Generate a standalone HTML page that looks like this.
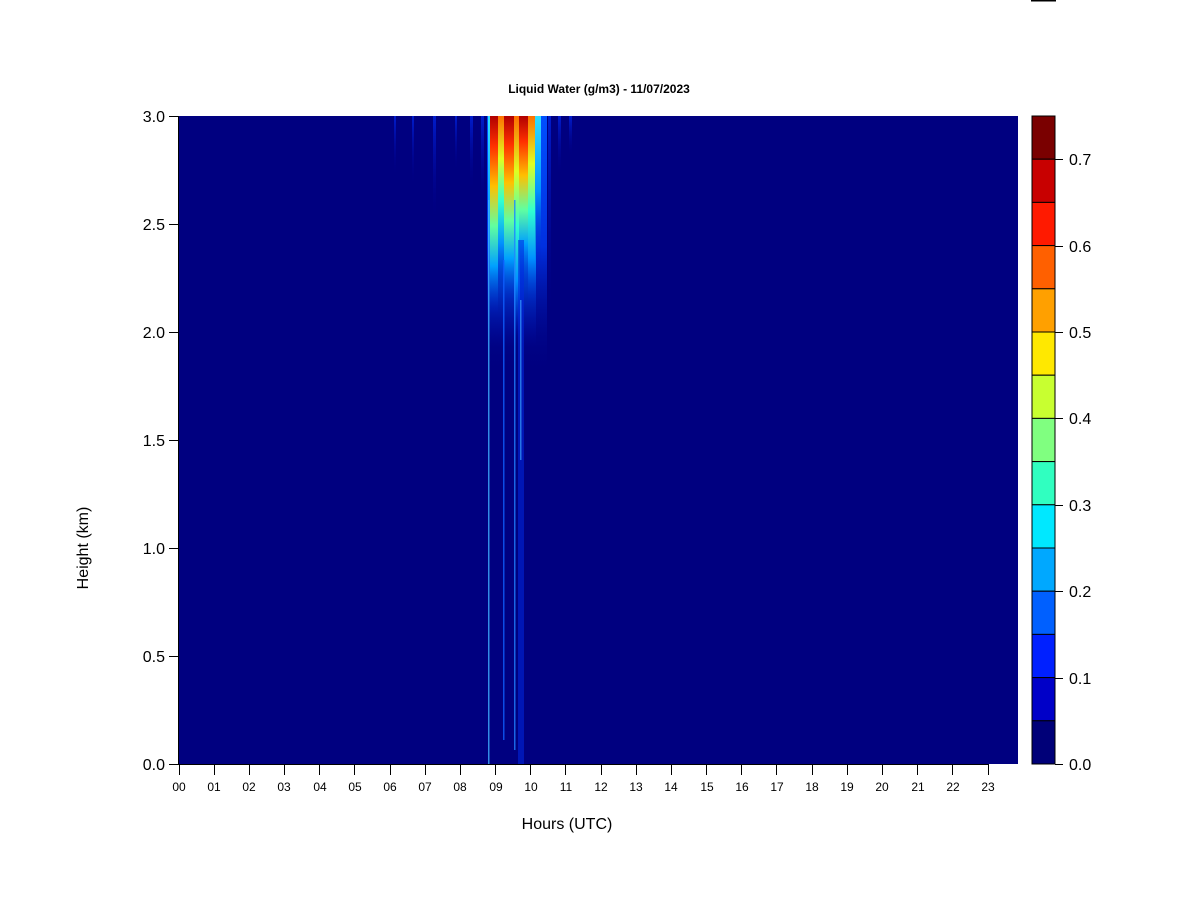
<!DOCTYPE html>
<html><head><meta charset="utf-8"><style>
html,body{margin:0;padding:0;background:#fff;}
svg{display:block;font-family:"Liberation Sans",Arial,sans-serif;}
</style></head><body>
<svg width="1200" height="900" viewBox="0 0 1200 900" xmlns="http://www.w3.org/2000/svg">
<defs>
<linearGradient id="hot" x1="0" y1="0" x2="0" y2="1">
<stop offset="0" stop-color="#b00000"/><stop offset="0.15" stop-color="#ff3000"/><stop offset="0.35" stop-color="#ffc000"/><stop offset="0.55" stop-color="#60ffa0"/><stop offset="0.75" stop-color="#00a0ff"/><stop offset="1" stop-color="#0010c0" stop-opacity="0"/></linearGradient>
<linearGradient id="warm" x1="0" y1="0" x2="0" y2="1">
<stop offset="0" stop-color="#ff7000"/><stop offset="0.25" stop-color="#e0ff20"/><stop offset="0.5" stop-color="#30ffd0"/><stop offset="0.75" stop-color="#0090ff"/><stop offset="1" stop-color="#0010c0" stop-opacity="0"/></linearGradient>
<linearGradient id="cool" x1="0" y1="0" x2="0" y2="1">
<stop offset="0" stop-color="#0050ff"/><stop offset="0.5" stop-color="#0030e0"/><stop offset="1" stop-color="#000080" stop-opacity="0"/></linearGradient>
<linearGradient id="cyan" x1="0" y1="0" x2="0" y2="1">
<stop offset="0" stop-color="#30e0ff"/><stop offset="0.5" stop-color="#0090ff"/><stop offset="1" stop-color="#0010c0" stop-opacity="0"/></linearGradient>
<linearGradient id="faint" x1="0" y1="0" x2="0" y2="1">
<stop offset="0" stop-color="#0030ff"/><stop offset="1" stop-color="#000090" stop-opacity="0"/></linearGradient>
</defs>
<rect x="1031" y="0" width="25" height="1.5" fill="#000"/>
<text x="599" y="93" font-size="12" font-weight="bold" text-anchor="middle">Liquid Water (g/m3) - 11/07/2023</text>
<rect x="179" y="116" width="839" height="648" fill="#000080"/>
<g opacity="0.6">
<rect x="394" y="116" width="2" height="60" fill="url(#faint)"/>
<rect x="412" y="116" width="2" height="70" fill="url(#faint)"/>
<rect x="433" y="116" width="3" height="105" fill="url(#faint)"/>
<rect x="455" y="116" width="2" height="55" fill="url(#faint)"/>
<rect x="470" y="116" width="3" height="75" fill="url(#faint)"/>
<rect x="481" y="116" width="3" height="90" fill="url(#faint)"/>
<rect x="548" y="116" width="3" height="200" fill="url(#faint)"/>
<rect x="558" y="116" width="3" height="60" fill="url(#faint)"/>
<rect x="569" y="116" width="3" height="40" fill="url(#faint)"/>
</g>
<rect x="487" y="116" width="60" height="260" fill="url(#cool)"/>
<rect x="488" y="116" width="48" height="230" fill="url(#cyan)"/>
<rect x="490" y="116" width="8" height="200" fill="url(#hot)"/>
<rect x="498" y="116" width="8" height="170" fill="url(#warm)"/>
<rect x="504" y="116" width="10" height="190" fill="url(#hot)"/>
<rect x="514" y="116" width="6" height="220" fill="url(#warm)"/>
<rect x="519" y="116" width="10" height="170" fill="url(#hot)"/>
<rect x="528" y="116" width="8" height="190" fill="url(#warm)"/>
<rect x="535" y="116" width="6" height="150" fill="url(#cyan)"/>
<g opacity="0.8">
<rect x="488" y="200" width="1.5" height="564" fill="#40b0ff"/>
<rect x="503" y="260" width="1.5" height="480" fill="#1060ff"/>
<rect x="514" y="200" width="1.5" height="550" fill="#2080ff"/>
<rect x="518" y="240" width="6" height="524" fill="#0028e0" opacity="0.7"/>
<rect x="520" y="300" width="1.5" height="160" fill="#3090ff"/>
</g>
<g stroke="#000" stroke-width="1" fill="none">
<line x1="179" y1="764.5" x2="989" y2="764.5"/>
<line x1="178.5" y1="116" x2="178.5" y2="764"/>
</g>
<g stroke="#000" stroke-width="1">
<line x1="169" y1="116.5" x2="179" y2="116.5"/><line x1="169" y1="224.5" x2="179" y2="224.5"/><line x1="169" y1="332.5" x2="179" y2="332.5"/><line x1="169" y1="440.5" x2="179" y2="440.5"/><line x1="169" y1="548.5" x2="179" y2="548.5"/><line x1="169" y1="656.5" x2="179" y2="656.5"/><line x1="169" y1="764.5" x2="179" y2="764.5"/>
</g>
<g font-size="16" text-anchor="end">
<text x="165" y="122">3.0</text><text x="165" y="230">2.5</text><text x="165" y="338">2.0</text><text x="165" y="446">1.5</text><text x="165" y="554">1.0</text><text x="165" y="662">0.5</text><text x="165" y="770">0.0</text>
</g>
<text x="88" y="548" font-size="16" text-anchor="middle" transform="rotate(-90 88 548)">Height (km)</text>
<text x="567" y="829" font-size="16" text-anchor="middle">Hours (UTC)</text>
<g stroke="#000" stroke-width="1">
<rect x="1032" y="116" width="23" height="43.2" fill="#7a0000"/>
<rect x="1032" y="159.2" width="23" height="43.2" fill="#c80000"/>
<rect x="1032" y="202.4" width="23" height="43.2" fill="#ff1a00"/>
<rect x="1032" y="245.6" width="23" height="43.2" fill="#ff6000"/>
<rect x="1032" y="288.8" width="23" height="43.2" fill="#ffa000"/>
<rect x="1032" y="332" width="23" height="43.2" fill="#ffe800"/>
<rect x="1032" y="375.2" width="23" height="43.2" fill="#c8ff30"/>
<rect x="1032" y="418.4" width="23" height="43.2" fill="#80ff80"/>
<rect x="1032" y="461.6" width="23" height="43.2" fill="#30ffc0"/>
<rect x="1032" y="504.8" width="23" height="43.2" fill="#00e8ff"/>
<rect x="1032" y="548" width="23" height="43.2" fill="#00a8ff"/>
<rect x="1032" y="591.2" width="23" height="43.2" fill="#0060ff"/>
<rect x="1032" y="634.4" width="23" height="43.2" fill="#0020ff"/>
<rect x="1032" y="677.6" width="23" height="43.2" fill="#0000c8"/>
<rect x="1032" y="720.8" width="23" height="43.2" fill="#000078"/>
<line x1="1055" y1="764.5" x2="1063" y2="764.5"/><line x1="1055" y1="678.5" x2="1063" y2="678.5"/><line x1="1055" y1="591.5" x2="1063" y2="591.5"/><line x1="1055" y1="505.5" x2="1063" y2="505.5"/><line x1="1055" y1="418.5" x2="1063" y2="418.5"/><line x1="1055" y1="332.5" x2="1063" y2="332.5"/><line x1="1055" y1="246.5" x2="1063" y2="246.5"/><line x1="1055" y1="159.5" x2="1063" y2="159.5"/>
</g>
<g font-size="16">
<text x="1069" y="770">0.0</text><text x="1069" y="684">0.1</text><text x="1069" y="597">0.2</text><text x="1069" y="511">0.3</text><text x="1069" y="424">0.4</text><text x="1069" y="338">0.5</text><text x="1069" y="252">0.6</text><text x="1069" y="165">0.7</text>
</g>
<g stroke="#000" stroke-width="1">
<line x1="179.5" y1="764" x2="179.5" y2="775"/><line x1="214.5" y1="764" x2="214.5" y2="775"/><line x1="249.5" y1="764" x2="249.5" y2="775"/><line x1="284.5" y1="764" x2="284.5" y2="775"/><line x1="319.5" y1="764" x2="319.5" y2="775"/><line x1="354.5" y1="764" x2="354.5" y2="775"/><line x1="390.5" y1="764" x2="390.5" y2="775"/><line x1="425.5" y1="764" x2="425.5" y2="775"/><line x1="460.5" y1="764" x2="460.5" y2="775"/><line x1="495.5" y1="764" x2="495.5" y2="775"/><line x1="530.5" y1="764" x2="530.5" y2="775"/><line x1="565.5" y1="764" x2="565.5" y2="775"/><line x1="601.5" y1="764" x2="601.5" y2="775"/><line x1="636.5" y1="764" x2="636.5" y2="775"/><line x1="671.5" y1="764" x2="671.5" y2="775"/><line x1="706.5" y1="764" x2="706.5" y2="775"/><line x1="741.5" y1="764" x2="741.5" y2="775"/><line x1="776.5" y1="764" x2="776.5" y2="775"/><line x1="812.5" y1="764" x2="812.5" y2="775"/><line x1="847.5" y1="764" x2="847.5" y2="775"/><line x1="882.5" y1="764" x2="882.5" y2="775"/><line x1="917.5" y1="764" x2="917.5" y2="775"/><line x1="952.5" y1="764" x2="952.5" y2="775"/><line x1="988.5" y1="764" x2="988.5" y2="775"/>
</g>
<g font-size="12" text-anchor="middle">
<text x="179" y="791">00</text><text x="214" y="791">01</text><text x="249" y="791">02</text><text x="284" y="791">03</text><text x="320" y="791">04</text><text x="355" y="791">05</text><text x="390" y="791">06</text><text x="425" y="791">07</text><text x="460" y="791">08</text><text x="496" y="791">09</text><text x="531" y="791">10</text><text x="566" y="791">11</text><text x="601" y="791">12</text><text x="636" y="791">13</text><text x="671" y="791">14</text><text x="707" y="791">15</text><text x="742" y="791">16</text><text x="777" y="791">17</text><text x="812" y="791">18</text><text x="847" y="791">19</text><text x="882" y="791">20</text><text x="918" y="791">21</text><text x="953" y="791">22</text><text x="988" y="791">23</text>
</g>
</svg>
</body></html>
